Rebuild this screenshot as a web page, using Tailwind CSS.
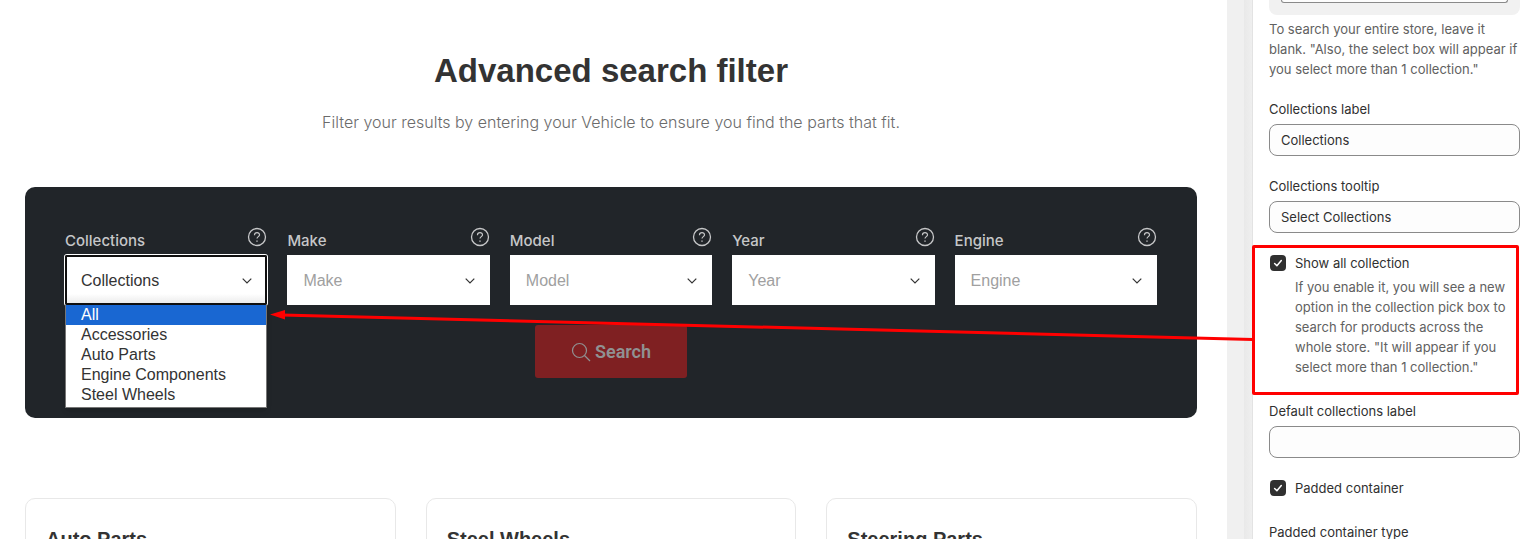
<!DOCTYPE html>
<html lang="en">
<head>
<meta charset="utf-8">
<title>Advanced search filter</title>
<script src="https://cdn.jsdelivr.net/npm/@tailwindcss/browser@4"></script>
</head>
<body class="relative flex h-screen overflow-hidden bg-[#f0f0f0] font-['Inter',sans-serif]">
<svg class="hidden">
  <symbol id="help" viewBox="0 0 20 20" fill="none" stroke="currentColor">
    <circle cx="10" cy="10" r="8.5" stroke-width="1.3"/>
    <path d="M7.500 8.200V7.800a2.500 2.300 0 0 1 5 .1c0 1.600-2.500 1.900-2.500 3.700" stroke-width="1.2"/>
    <path d="M10 13.400v1.400" stroke-width="1.400"/>
  </symbol>
  <symbol id="chevron" viewBox="0 0 10 6" fill="none" stroke="currentColor">
    <path d="M.7.700 5 5 9.300.700" stroke-width="1.200"/>
  </symbol>
  <symbol id="check" viewBox="0 0 16 16" fill="none" stroke="currentColor">
    <path d="M4.600 8.500 6.900 10.700l4.400-5.200" stroke-width="1.500" stroke-linecap="round" stroke-linejoin="round"/>
  </symbol>
</svg>

<main class="min-w-0 flex-1 overflow-hidden bg-white pl-[25px] pr-[30px] pt-[51px]">
  <h1 class="text-center text-[33px] leading-10 font-bold text-[#333] font-['Liberation_Sans',sans-serif]">Advanced search filter</h1>
  <p class="mt-[19px] text-center text-base leading-6 font-[350] text-[#6b6b6b]">Filter your results by entering your Vehicle to ensure you find the parts that fit.</p>

  <form class="mt-[53px] rounded-[10px] bg-[#212529] p-10">
    <div class="grid grid-cols-5 gap-5">
      <div>
        <div class="flex h-7 items-start justify-between text-[#c6c7c8]">
          <label for="f1" class="text-[15px] leading-7 font-medium">Collections</label>
          <button type="button" aria-label="Select Collections"><svg class="size-5"><use href="#help"/></svg></button>
        </div>
        <div class="relative">
          <select id="f1" class="h-[50px] w-full appearance-none rounded-[2px] border-2 border-[#101010] bg-linear-to-b from-white from-80% to-[#ececec] pl-3.5 pt-0.5 text-base text-[#333] ring-1 ring-white outline-none font-['Liberation_Sans',sans-serif]"><option>Collections</option></select>
          <svg class="pointer-events-none absolute right-[15px] top-[23px] h-1.5 w-2.5 text-[#333]"><use href="#chevron"/></svg>
          <ul role="listbox" aria-label="Collections" class="absolute inset-x-0 top-full z-10 border border-t-0 border-[#767676] bg-white pb-0.5 text-base leading-5 text-[#333] shadow-md font-['Liberation_Sans',sans-serif]">
            <li role="option" aria-selected="true" class="bg-[#1967d2] pl-[15px] text-white">All</li>
            <li role="option" class="pl-[15px]">Accessories</li>
            <li role="option" class="pl-[15px]">Auto Parts</li>
            <li role="option" class="pl-[15px]">Engine Components</li>
            <li role="option" class="pl-[15px]">Steel Wheels</li>
          </ul>
        </div>
      </div>
      <div>
        <div class="flex h-7 items-start justify-between text-[#c6c7c8]">
          <label for="f2" class="text-[15px] leading-7 font-medium">Make</label>
          <button type="button" aria-label="Select Make"><svg class="size-5"><use href="#help"/></svg></button>
        </div>
        <div class="relative">
          <select id="f2" class="h-[50px] w-full appearance-none bg-white pl-4 pt-0.5 text-base text-[#a0a0a0] font-['Liberation_Sans',sans-serif]"><option>Make</option></select>
          <svg class="pointer-events-none absolute right-[15px] top-[23px] h-1.5 w-2.5 text-[#333]"><use href="#chevron"/></svg>
        </div>
      </div>
      <div>
        <div class="flex h-7 items-start justify-between text-[#c6c7c8]">
          <label for="f3" class="text-[15px] leading-7 font-medium">Model</label>
          <button type="button" aria-label="Select Model"><svg class="size-5"><use href="#help"/></svg></button>
        </div>
        <div class="relative">
          <select id="f3" class="h-[50px] w-full appearance-none bg-white pl-4 pt-0.5 text-base text-[#a0a0a0] font-['Liberation_Sans',sans-serif]"><option>Model</option></select>
          <svg class="pointer-events-none absolute right-[15px] top-[23px] h-1.5 w-2.5 text-[#333]"><use href="#chevron"/></svg>
        </div>
      </div>
      <div>
        <div class="flex h-7 items-start justify-between text-[#c6c7c8]">
          <label for="f4" class="text-[15px] leading-7 font-medium">Year</label>
          <button type="button" aria-label="Select Year"><svg class="size-5"><use href="#help"/></svg></button>
        </div>
        <div class="relative">
          <select id="f4" class="h-[50px] w-full appearance-none bg-white pl-4 pt-0.5 text-base text-[#a0a0a0] font-['Liberation_Sans',sans-serif]"><option>Year</option></select>
          <svg class="pointer-events-none absolute right-[15px] top-[23px] h-1.5 w-2.5 text-[#333]"><use href="#chevron"/></svg>
        </div>
      </div>
      <div>
        <div class="flex h-7 items-start justify-between text-[#c6c7c8]">
          <label for="f5" class="text-[15px] leading-7 font-medium">Engine</label>
          <button type="button" aria-label="Select Engine"><svg class="size-5"><use href="#help"/></svg></button>
        </div>
        <div class="relative">
          <select id="f5" class="h-[50px] w-full appearance-none bg-white pl-4 pt-0.5 text-base text-[#a0a0a0] font-['Liberation_Sans',sans-serif]"><option>Engine</option></select>
          <svg class="pointer-events-none absolute right-[15px] top-[23px] h-1.5 w-2.5 text-[#333]"><use href="#chevron"/></svg>
        </div>
      </div>
    </div>
    <button type="submit" class="mx-auto mt-5 flex h-[53px] w-[152px] items-center justify-center gap-1 rounded-[3px] bg-[#7f2022] text-lg font-semibold text-[#909192] font-['Roboto',sans-serif]">
      <svg class="size-5" viewBox="0 0 20 20" fill="none" stroke="currentColor" stroke-width="1.200"><circle cx="8.500" cy="8.500" r="7"/><path d="m13.500 13.500 5.500 5.500"/></svg>
      Search
    </button>
  </form>

  <div class="mt-20 grid grid-cols-3 gap-[30px] font-['Liberation_Sans',sans-serif] text-xl font-bold text-[#333]">
    <section class="h-40 rounded-[10px] border border-[#e8e8e8] px-5 pt-[26px]"><h2 class="leading-7">Auto Parts</h2></section>
    <section class="h-40 rounded-[10px] border border-[#e8e8e8] px-5 pt-[26px]"><h2 class="leading-7">Steel Wheels</h2></section>
    <section class="h-40 rounded-[10px] border border-[#e8e8e8] px-5 pt-[26px]"><h2 class="leading-7">Steering Parts</h2></section>
  </div>
</main>

<div class="ml-[17px] w-2 shrink-0 bg-linear-to-r from-[#e9e9e9] to-[#efefef]"></div>

<aside class="w-[277px] shrink-0 overflow-hidden border-l border-[#e3e3e3] bg-white pl-4 pr-[9px] text-[13px] leading-5 text-[#303030]">
  <div class="h-[15px] rounded-b-lg bg-[#f1f1f1] px-3">
    <div class="h-[3px] rounded-b-lg border border-t-0 border-[#8a8a8a] bg-[#fdfdfd]"></div>
  </div>
  <p class="mt-1 text-[#616161]">To search your entire store, leave it blank. "Also, the select box will appear if you select more than 1 collection."</p>
  <label for="s1" class="mt-5 block">Collections label</label>
  <input id="s1" type="text" value="Collections" class="mt-[5px] block h-8 w-full rounded-lg border border-[#8a8a8a] bg-[#fdfdfd] px-[11px]">
  <label for="s2" class="mt-5 block">Collections tooltip</label>
  <input id="s2" type="text" value="Select Collections" class="mt-[5px] block h-8 w-full rounded-lg border border-[#8a8a8a] bg-[#fdfdfd] px-[11px]">
  <div class="mt-5 flex items-center gap-[9px] pl-px">
    <span class="relative size-4"><input id="s3" type="checkbox" checked class="block size-4 appearance-none rounded bg-[#303030]"><svg class="pointer-events-none absolute inset-0 size-4 text-white"><use href="#check"/></svg></span>
    <label for="s3">Show all collection</label>
  </div>
  <p class="mt-1 pl-[26px] text-[#616161]">If you enable it, you will see a new option in the collection pick box to search for products across the whole store. "It will appear if you select more than 1 collection."</p>
  <label for="s4" class="mt-6 block">Default collections label</label>
  <input id="s4" type="text" class="mt-[5px] block h-8 w-full rounded-lg border border-[#8a8a8a] bg-[#fdfdfd] px-[11px]">
  <div class="mt-5 flex items-center gap-[9px] pl-px">
    <span class="relative size-4"><input id="s5" type="checkbox" checked class="block size-4 appearance-none rounded bg-[#303030]"><svg class="pointer-events-none absolute inset-0 size-4 text-white"><use href="#check"/></svg></span>
    <label for="s5">Padded container</label>
  </div>
  <div class="mt-6">Padded container type</div>
</aside>

<!-- Callout: frame around the setting and an arrow to the option it adds -->
<div class="pointer-events-none absolute right-2.5 top-[245px] z-20 h-[150px] w-[267px] rounded-[2px] border-3 border-[#f00]"></div>
<div class="pointer-events-none absolute left-[270px] right-[276px] top-[305px] z-20 h-10">
  <svg class="h-full w-full" fill="#f00" stroke="#f00">
    <line x1="12" y1="10" x2="100%" y2="34.500" stroke-width="3"/>
    <path d="M0 9.500 15 5v9.500z" stroke="none"/>
  </svg>
</div>
</body>
</html>
